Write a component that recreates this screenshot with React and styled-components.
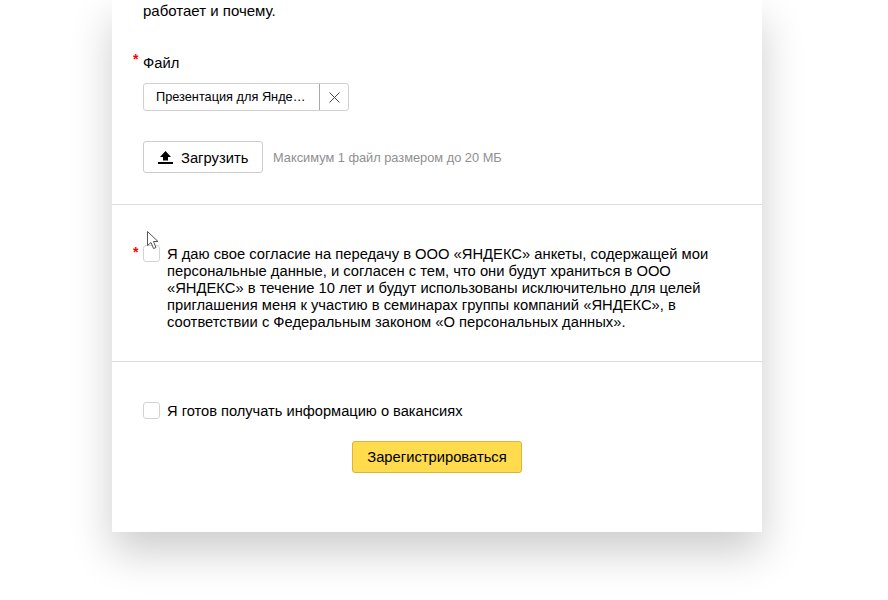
import React from "react";
import styled, { createGlobalStyle } from "styled-components";

const Global = createGlobalStyle`
  html, body { margin: 0; padding: 0; background: #fff; height: 600px; overflow: hidden; }
  body { font-family: "Liberation Sans", Arial, sans-serif; color: #000; }
`;
const Page = styled.div`
  width: 888px; height: 600px; overflow: hidden; padding-left: 112px; box-sizing: border-box; position: relative;
`;
const Card = styled.main`
  width: 650px; height: 532px; background: #fff; box-shadow: 0 20px 40px rgba(0,0,0,.2);
  display: flex; flex-direction: column; position: relative;
`;
const Section = styled.section`
  padding: ${p => p.$pad || "0 31px"};
  border-bottom: ${p => (p.$line ? "1px solid #dcdcdc" : "none")};
  height: ${p => p.$h}px; box-sizing: border-box; flex: none;
`;
const Text = styled.p`
  margin: 1px 0 0; font-size: ${p => p.$size || 14.75}px; line-height: 17px;
`;
const Lead = styled(Text)`
  font-size: 15px; line-height: 20px; margin-top: 1px;
`;
const Label = styled.div`
  font-size: 14.75px; line-height: 18px; margin-top: 33px; position: relative;
`;
const Star = styled.span`
  position: absolute; left: -10px; top: ${p => p.$top ?? -4}px; color: #f00; font-size: 14px; font-weight: bold; line-height: 18px;
`;
const FileChip = styled.div`
  display: inline-flex; margin-top: 11px; height: 28px; box-sizing: border-box;
  border: 1px solid #d0d0d0; border-radius: 3px; vertical-align: top;
`;
const FileName = styled.span`
  width: 176px; padding-left: 12px; box-sizing: border-box; font-size: 12.75px; line-height: 26px;
  border-right: 1px solid #a8a8a8;
`;
const Remove = styled.span`
  width: 28px; display: flex; align-items: center; justify-content: center;
`;
const UploadRow = styled.div`
  display: flex; align-items: center; margin-top: 30px; gap: 10px;
`;
const UploadButton = styled.div`
  width: 120px; height: 32px; box-sizing: border-box; border: 1px solid #ccc; border-radius: 3px;
  display: flex; align-items: center; padding-left: 14px; gap: 8px; font-size: 14.75px;
`;
const UploadLabel = styled.span`
  margin-top: 2px;
`;
const Hint = styled.span`
  font-size: 12.8px; color: #8f8f8f;
`;
const CheckRow = styled.div`
  display: flex; gap: 7px; position: relative; align-items: flex-start;
`;
const Box = styled.span`
  width: 17px; height: 17px; flex: none; box-sizing: border-box; background: #fff;
  border: 1px solid #d4d4d4; border-radius: 3px;
`;
const Submit = styled.div`
  width: 170px; height: 32px; margin: 21px 0 0 209px; box-sizing: border-box;
  background: #ffdb4d; border: 1px solid #d9b53c; border-radius: 3px;
  font-size: 14.75px; line-height: 30px; text-align: center;
`;
const Cursor = styled.svg`
  position: absolute; left: 146px; top: 230px;
`;

export default function App() {
  return (
    <Page>
      <Global />
      <Card>
        <Section $h={205} $line>
          <Lead>работает и почему.</Lead>
          <Label><Star>*</Star>Файл</Label>
          <FileChip>
            <FileName>Презентация для Янде…</FileName>
            <Remove>
              <svg width="11" height="11" viewBox="0 0 11 11"><path d="M.5.5l10 10M10.5.5l-10 10" stroke="#444" fill="none" /></svg>
            </Remove>
          </FileChip>
          <UploadRow>
            <UploadButton>
              <svg width="15" height="13" viewBox="0 0 15 13"><path d="M7.5 0L13 6H10V9.5H5V6H2zM0 11h15v2H0z" fill="#000" /></svg>
              <UploadLabel>Загрузить</UploadLabel>
            </UploadButton>
            <Hint>Максимум 1 файл размером до 20 МБ</Hint>
          </UploadRow>
        </Section>
        <Section $h={157} $line $pad="40px 31px 0">
          <CheckRow>
            <Star $top={-2}>*</Star>
            <Box />
            <Text>Я даю свое согласие на передачу в ООО «ЯНДЕКС» анкеты, содержащей мои<br />персональные данные, и согласен с тем, что они будут храниться в ООО<br />«ЯНДЕКС» в течение 10 лет и будут использованы исключительно для целей<br />приглашения меня к участию в семинарах группы компаний «ЯНДЕКС», в<br />соответствии с Федеральным законом «О персональных данных».</Text>
          </CheckRow>
        </Section>
        <Section $h={170} $pad="40px 31px 0">
          <CheckRow>
            <Box />
            <Text $size={14.65}>Я готов получать информацию о вакансиях</Text>
          </CheckRow>
          <Submit>Зарегистрироваться</Submit>
        </Section>
      </Card>
      <Cursor width="14" height="20" viewBox="0 0 14 20">
        <path d="M1.5 1.5V15.5L5 12.5L7.5 18.5L10 17.5L7.5 11.5H12z" fill="#fff" stroke="#555" strokeWidth="1" />
      </Cursor>
    </Page>
  );
}
